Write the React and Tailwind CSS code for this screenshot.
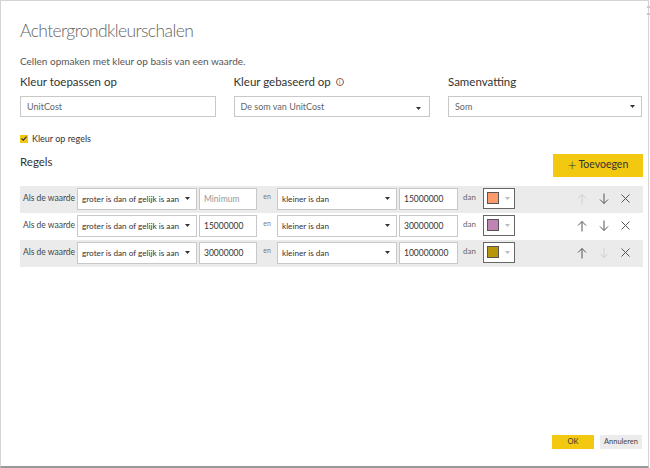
import React from "react";

const F = { fontFamily: 'Lato, "Noto Sans", sans-serif' };

function Caret({ className = "" }) {
  return (
    <svg width="5" height="3" viewBox="0 0 5 3" className={className}>
      <path d="M0 0 L5 0 L2.5 3 Z" fill="currentColor" />
    </svg>
  );
}

function Arrow({ dir, color }) {
  const up = dir === "up";
  return (
    <svg width="10" height="12" viewBox="0 0 10 12" fill="none" stroke={color} strokeWidth="1">
      {up ? (
        <>
          <path d="M5 1.5 L5 11.5" />
          <path d="M1 5.5 L5 1.5 L9 5.5" />
        </>
      ) : (
        <>
          <path d="M5 0.5 L5 10.5" />
          <path d="M1 6.5 L5 10.5 L9 6.5" />
        </>
      )}
    </svg>
  );
}

function Close() {
  return (
    <svg width="9" height="9" viewBox="0 0 9 9" fill="none" stroke="#555" strokeWidth="1">
      <path d="M0.5 0.5 L8.5 8.5 M8.5 0.5 L0.5 8.5" />
    </svg>
  );
}

function Row({ bg, min, max, color, upOn, downOn }) {
  return (
    <div className={`flex items-start h-[27px] pt-[2px] whitespace-nowrap ${bg}`}>
      <div className="w-[57px] pl-[3px] pt-[4px] text-[8.5px] leading-[12px] text-[#444]">Als de waarde</div>
      <div className="w-[120px] h-[22px] bg-white border border-[#c8c8c8] flex items-center justify-between pl-[4px] pr-[6px] text-[8.2px] text-[#333]">
        <span className="pt-[2px]">groter is dan of gelijk is aan</span>
        <Caret className="text-[#333]" />
      </div>
      <div className={`ml-[2px] w-[58px] h-[22px] bg-white border border-[#c8c8c8] flex items-center pl-[4px] text-[8.5px] ${min === "Minimum" ? "text-[#999]" : "text-[#333]"}`}>
        <span className="pt-[2px]">{min}</span>
      </div>
      <div className="w-[20px] pt-[3px] text-center text-[7px] text-[#777]">en</div>
      <div className="w-[120px] h-[22px] bg-white border border-[#c8c8c8] flex items-center justify-between pl-[4px] pr-[6px] text-[8.2px] text-[#333]">
        <span className="pt-[2px]">kleiner is dan</span>
        <Caret className="text-[#333]" />
      </div>
      <div className="ml-[2px] w-[59px] h-[22px] bg-white border border-[#c8c8c8] flex items-center pl-[4px] text-[8.5px] text-[#333]">
        <span className="pt-[2px]">{max}</span>
      </div>
      <div className="w-[25px] pl-[5px] pt-[3px] text-[8px] text-[#666]">dan</div>
      <div className="w-[32px] h-[21px] bg-white border border-[#666] flex items-center pl-[3px]">
        <div className="w-[12px] h-[12px] border border-[#555]" style={{ backgroundColor: color }} />
        <Caret className="ml-[6px] text-[#bbb]" />
      </div>
      <div className="flex-1" />
      <div className="flex items-center h-[22px] gap-[12px] pr-[13px]">
        <Arrow dir="up" color={upOn ? "#555" : "#d0d0d0"} />
        <Arrow dir="down" color={downOn ? "#555" : "#d0d0d0"} />
        <Close />
      </div>
    </div>
  );
}

export default function App() {
  return (
    <div style={F} className="w-[650px] h-[468px] bg-white overflow-hidden whitespace-nowrap">
      <div className="relative w-[649px] h-[468px] border-l border-t border-r border-[#d4d4d4] border-b-2 border-b-[#9a9a9a] flex flex-col pl-[19px] pr-[6px]">
        <div className="absolute right-[-2px] top-[5px] w-[3px] h-[2px] bg-[#c8c8c8]" />
        <div className="absolute right-[-2px] top-[12px] w-[3px] h-[2px] bg-[#c8c8c8]" />
        <div className="mt-[16px] text-[17.5px] tracking-[-0.6px] font-light leading-[28px] text-[#666]">Achtergrondkleurschalen</div>
        <div className="mt-[9px] text-[10px] leading-[14px] text-[#555]">Cellen opmaken met kleur op basis van een waarde.</div>
        <div className="mt-[5px] flex">
          <div className="w-[214px]">
            <div className="text-[11.5px] leading-[18px] text-[#333]">Kleur toepassen op</div>
            <div className="mt-[5px] w-[196px] h-[21px] border border-[#c8c8c8] flex items-center pl-[6px] text-[9px] text-[#666]">
              <span className="pt-[1px]">UnitCost</span>
            </div>
          </div>
          <div className="w-[215px]">
            <div className="text-[11.5px] leading-[18px] text-[#333] flex items-center">
              Kleur gebaseerd op
              <span className="ml-[5px] inline-flex items-center justify-center w-[8px] h-[8px] rounded-full border border-[#a0522d] text-[6px] leading-none text-[#a0522d]">i</span>
            </div>
            <div className="mt-[5px] w-[196px] h-[21px] border border-[#c8c8c8] flex items-center justify-between pl-[6px] pr-[8px] text-[9px] text-[#666]">
              <span className="pt-[1px]">De som van UnitCost</span>
              <Caret className="text-[#333] mt-[4px]" />
            </div>
          </div>
          <div className="w-[194px]">
            <div className="text-[11.5px] leading-[18px] text-[#333]">Samenvatting</div>
            <div className="mt-[5px] w-[194px] h-[21px] border border-[#c8c8c8] flex items-center justify-between pl-[6px] pr-[6px] text-[9px] text-[#666]">
              <span className="pt-[1px]">Som</span>
              <Caret className="text-[#333]" />
            </div>
          </div>
        </div>
        <div className="mt-[15px] flex items-center">
          <div className="w-[8px] h-[8px] bg-[#f2c811] flex items-center justify-center">
            <svg width="6" height="5" viewBox="0 0 6 5" fill="none" stroke="#333" strokeWidth="1.2">
              <path d="M0.5 2.5 L2.3 4.2 L5.5 0.6" />
            </svg>
          </div>
          <span className="ml-[4px] text-[9px] text-[#333]">Kleur op regels</span>
        </div>
        <div className="mt-[7px] flex items-end justify-between w-[623px]">
          <div className="text-[11.5px] leading-[18px] text-[#333] mb-[6px]">Regels</div>
          <div className="w-[90px] h-[23px] bg-[#f2c811] flex items-center justify-center text-[10.5px] text-[#333]">
            <span className="text-[15px] leading-none mr-[2px] font-light">+</span>Toevoegen
          </div>
        </div>
        <div className="mt-[9px] w-[623px] flex flex-col">
          <Row bg="bg-[#ebebeb]" min="Minimum" max="15000000" color="#fd9a6b" upOn={false} downOn={true} />
          <Row bg="bg-white" min="15000000" max="30000000" color="#c084b4" upOn={true} downOn={true} />
          <Row bg="bg-[#ebebeb]" min="30000000" max="100000000" color="#b8960c" upOn={true} downOn={false} />
        </div>
        <div className="flex-1" />
        <div className="flex justify-end gap-[6px] mb-[17px]">
          <div className="w-[42px] h-[14px] bg-[#f2c811] flex items-center justify-center text-[7.5px] text-[#333]">OK</div>
          <div className="w-[42px] h-[14px] bg-[#ececec] flex items-center justify-center text-[7.5px] text-[#444]">Annuleren</div>
        </div>
      </div>
    </div>
  );
}
